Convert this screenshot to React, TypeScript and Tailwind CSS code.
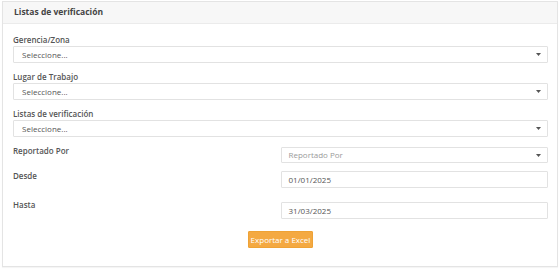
import React from 'react'

function Caret() {
  return (
    <svg width="5" height="3" viewBox="0 0 5 3" className="shrink-0">
      <path d="M0 0 L5 0 L2.5 3 Z" fill="#555" />
    </svg>
  )
}

function SelectBox({ text, muted = false }: { text: string; muted?: boolean }) {
  return (
    <div className="flex h-[17px] items-center justify-between rounded-[1px] border border-[#e2e2e2] bg-white pl-[8px] pr-[6px]">
      <span className={muted ? 'text-[#9a9a9a]' : 'text-[#555]'}>{text}</span>
      <Caret />
    </div>
  )
}

function DateBox({ value }: { value: string }) {
  return (
    <div className="flex h-[17px] items-center rounded-[1px] border border-[#e2e2e2] bg-white pl-[7px] text-[#555]">
      {value}
    </div>
  )
}

export default function App() {
  return (
    <div className="min-h-screen bg-white pl-[2px] pt-[1px] font-['Open_Sans',sans-serif] text-[8px]">
      <div className="h-[266px] w-[556px] border border-[#e4e4e4] bg-white shadow-[0_1px_1px_rgba(0,0,0,0.04)]">
        {/* Header */}
        <div className="flex h-[22px] items-center border-b border-[#ebebeb] bg-[#f7f7f7] px-[11px]">
          <h3 className="text-[8.5px] font-bold text-[#444]">Listas de verificación</h3>
        </div>

        {/* Form */}
        <div className="pl-[10px] pr-[9px] pt-[10px]">
          {['Gerencia/Zona', 'Lugar de Trabajo', 'Listas de verificación'].map((label, i) => (
            <div key={label} className={i > 0 ? 'mt-[8px]' : ''}>
              <div className="leading-[12px] font-semibold text-[#555]">{label}</div>
              <SelectBox text="Seleccione..." />
            </div>
          ))}

          <div className="mt-[10px] grid grid-cols-2 items-start">
            <div className="-mt-[2px] leading-[11px] font-semibold text-[#555]">Reportado Por</div>
            <div className="flex h-[16px] items-center justify-between rounded-[1px] border border-[#e2e2e2] bg-white pl-[7px] pr-[6px]">
              <span className="text-[#9a9a9a]">Reportado Por</span>
              <Caret />
            </div>
          </div>

          <div className="mt-[8px] grid grid-cols-2 items-start">
            <div className="-mt-[1px] leading-[11px] font-semibold text-[#555]">Desde</div>
            <DateBox value="01/01/2025" />
          </div>

          <div className="mt-[14px] grid grid-cols-2 items-start">
            <div className="-mt-[3px] leading-[11px] font-semibold text-[#555]">Hasta</div>
            <DateBox value="31/03/2025" />
          </div>

          <div className="mt-[12px] flex justify-center">
            <button className="h-[17px] w-[65px] rounded-[1px] border border-[#eea236] bg-[#f4a942] text-[8px] text-white">
              Exportar a Excel
            </button>
          </div>
        </div>
      </div>
    </div>
  )
}
